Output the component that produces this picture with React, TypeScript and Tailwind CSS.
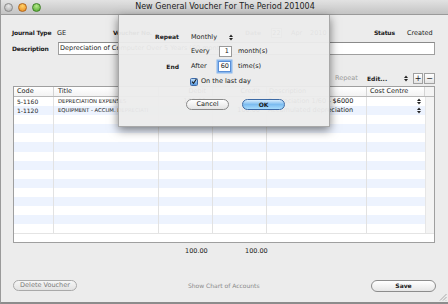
import React from "react";

const F = { fontFamily: '"DejaVu Sans", "Noto Sans", sans-serif' } as React.CSSProperties;

function Arrows({ className = "" }: { className?: string }) {
  return (
    <svg width="4" height="7" viewBox="0 0 4 7" className={className}>
      <path d="M0 3 L2 0.5 L4 3 Z" fill="#222" />
      <path d="M0 4 L2 6.5 L4 4 Z" fill="#222" />
    </svg>
  );
}

function Light({ from, to, border }: { from: string; to: string; border: string }) {
  return (
    <div
      className="w-[9px] h-[9px] rounded-full"
      style={{ background: `radial-gradient(circle at 50% 30%, ${from}, ${to})`, border: `1px solid ${border}` }}
    />
  );
}

const rows = Array.from({ length: 15 }, (_, i) => i);

export default function App() {
  return (
    <div
      className="relative w-[448px] h-[304px] overflow-hidden bg-[#ececec] border-l border-[#9a9a9a] border-b-2 border-b-[#8c8c8c] flex flex-col text-[6.5px] text-[#1a1a1a] leading-none whitespace-nowrap"
      style={F}
    >
      {/* Title bar */}
      <div className="h-[15px] shrink-0 flex items-center relative bg-gradient-to-b from-[#e2e2e2] to-[#c4c4c4] border-b border-[#9a9a9a]">
        <div className="flex items-center gap-[5px] pl-[3px]">
          <Light from="#e6e6e6" to="#a9a9a9" border="#8a8a8a" />
          <Light from="#ffd36a" to="#e8871c" border="#b0651a" />
          <Light from="#b6ea8a" to="#4da52a" border="#3e8126" />
        </div>
        <div className="absolute inset-0 flex items-center justify-center text-[8px] text-[#222] pl-[1px]">
          New General Voucher For The Period 201004
        </div>
      </div>

      {/* Content */}
      <div className="flex flex-col pl-[11px]">
        {/* Row 1 */}
        <div className="mt-[12px] h-[12px] flex items-center">
          <span className="w-[45px] font-bold text-[6px] tracking-[-0.2px]">Journal Type</span>
          <span className="w-[56px]">GE</span>
          <span className="w-[132px] font-bold text-[6px] tracking-[-0.2px]">Voucher No.</span>
          <span className="w-[26px] font-bold text-[#555] text-[6px]">Date</span>
          <span className="w-[11px] h-[10px] border border-[#b5b5b5] bg-white flex items-center justify-center">22</span>
          <span className="w-[9px]" />
          <span className="w-[19px]">Apr</span>
          <span className="w-[64px]">2010</span>
          <span className="w-[33px] font-bold text-[6px] tracking-[-0.2px]">Status</span>
          <span>Created</span>
        </div>
        {/* Row 2 */}
        <div className="mt-[3px] h-[13px] flex items-center">
          <span className="w-[46px] font-bold text-[6px] tracking-[-0.2px]">Description</span>
          <div className="w-[377px] h-[13px] bg-white border border-[#9f9f9f] border-t-[#8a8a8a] flex items-center pl-[1px]">
            Depreciation of Computer Over 5 Years (60 months)
          </div>
        </div>
        {/* Toolbar */}
        <div className="mt-[18px] h-[11px] flex items-center">
          <span className="ml-[323px] w-[32px] text-[#9a9a9a]">Repeat</span>
          <span className="w-[37px] font-bold text-[6px] text-[#222]">Edit...</span>
          <Arrows className="mr-[5px]" />
          <div className="w-[10px] h-[11px] bg-gradient-to-b from-white to-[#e4e4e4] border border-[#a0a0a0] flex items-center justify-center text-[8px]">+</div>
          <div className="ml-[1px] w-[11px] h-[11px] bg-gradient-to-b from-white to-[#e4e4e4] border border-[#a0a0a0] flex items-center justify-center text-[8px]">−</div>
        </div>
      </div>

      {/* Table */}
      <div className="mt-[2px] ml-[12px] w-[422px] h-[157px] border border-[#9f9f9f] bg-white flex flex-col">
        <div className="h-[10px] shrink-0 flex border-b border-[#b8b8b8] bg-gradient-to-b from-white to-[#f3f3f3]">
          <div className="w-[40px] border-r border-[#d4d4d4] pl-[3px] flex items-center">Code</div>
          <div className="w-[105px] border-r border-[#d4d4d4] pl-[4px] flex items-center">Title</div>
          <div className="w-[54px] border-r border-[#d4d4d4] pr-[6px] flex items-center justify-end">Debit</div>
          <div className="w-[54px] border-r border-[#d4d4d4] pr-[6px] flex items-center justify-end">Credit</div>
          <div className="w-[100px] border-r border-[#d4d4d4] pl-[2px] flex items-center">Description</div>
          <div className="w-[58px] border-r border-[#d4d4d4] pl-[3px] flex items-center">Cost Centre</div>
          <div className="flex-1 bg-[#f4f4f4]" />
        </div>
        <div className="flex">
          <div className="w-[411px] flex flex-col">
            {rows.map((i) => (
              <div key={i} className={`h-[9.1px] flex ${i % 2 === 1 ? "bg-[#edf3fe]" : "bg-white"}`}>
                <div className="w-[40px] border-r border-[#e2e2e2] pl-[3px] flex items-center text-[6px]">
                  {i === 0 ? "5-1160" : i === 1 ? "1-1120" : ""}
                </div>
                <div className="w-[105px] border-r border-[#e2e2e2] pl-[4px] flex items-center text-[5.3px] overflow-hidden">
                  {i === 0 ? "DEPRECIATION EXPENSES" : i === 1 ? "EQUIPMENT - ACCUM. DEPRECIATI" : ""}
                </div>
                <div className="w-[54px] border-r border-[#e2e2e2] pr-[6px] flex items-center justify-end">
                  {i === 0 ? "100.00" : ""}
                </div>
                <div className="w-[54px] border-r border-[#e2e2e2] pr-[6px] flex items-center justify-end">
                  {i === 1 ? "100.00" : ""}
                </div>
                <div className="w-[100px] border-r border-[#e2e2e2] pl-[1px] flex items-center overflow-hidden">
                  {i === 0 ? "Depreciation 1/60 - $6000" : i === 1 ? "Accumulated depreciation" : ""}
                </div>
                <div className="w-[58px] flex items-center justify-end pr-[4px]">
                  {i < 2 ? <Arrows /> : null}
                </div>
              </div>
            ))}
          </div>
          <div className="flex-1 bg-[#f4f4f4] border-l border-[#e6e6e6]" />
        </div>
        <div className="flex-1 bg-white border-t border-[#e4e4e4]" />
      </div>

      {/* Totals */}
      <div className="mt-[3px] h-[10px] flex items-center">
        <span className="ml-[184px] w-[60px]">100.00</span>
        <span>100.00</span>
      </div>

      {/* Bottom */}
      <div className="mt-[24px] h-[11px] flex items-center">
        <div className="ml-[12px] w-[64px] h-[11px] rounded-full border border-[#a9a9a9] bg-gradient-to-b from-[#f6f6f6] to-[#e2e2e2] flex items-center justify-center text-[#7a7a7a]">
          Delete Voucher
        </div>
        <span className="ml-[111px] text-[#8a8a8a] text-[6px]">Show Chart of Accounts</span>
        <div className="ml-auto mr-[12px] w-[65px] h-[12px] rounded-full border border-[#8c8c8c] bg-gradient-to-b from-white to-[#e6e6e6] flex items-center justify-center font-bold text-[6px]">
          Save
        </div>
      </div>

      {/* Resize grip */}
      <svg className="absolute right-[1px] bottom-[1px]" width="9" height="9" viewBox="0 0 9 9">
        <path d="M8.5 2 L2 8.5 M8.5 5 L5 8.5 M8.5 8 L8 8.5" stroke="#9a9a9a" strokeWidth="0.8" />
      </svg>

      {/* Sheet */}
      <div className="absolute left-[117px] top-[15px] w-[212px] h-[112px] bg-[rgba(236,236,236,0.95)] shadow-[0_3px_9px_rgba(0,0,0,0.5)] border-x border-b border-[#a8a8a8] flex flex-col">
        <div className="mt-[17px] h-[10px] flex items-center">
          <span className="w-[60px] text-right font-bold text-[6px]">Repeat</span>
          <span className="ml-[12px] w-[38px]">Monthly</span>
          <Arrows />
        </div>
        <div className="mt-[4px] h-[11px] flex items-center">
          <span className="ml-[72px] w-[28px]">Every</span>
          <div className="w-[13px] h-[11px] bg-white border border-[#9a9a9a] flex items-center justify-end pr-[2px]">1</div>
          <span className="ml-[6px]">month(s)</span>
        </div>
        <div className="mt-[4px] h-[11px] flex items-center">
          <span className="w-[60px] text-right font-bold text-[6px]">End</span>
          <span className="ml-[12px] w-[27px]">After</span>
          <div className="w-[13px] h-[11px] bg-white border border-[#5b8fd6] shadow-[0_0_0_1.5px_#8ab8ee] flex items-center justify-end pr-[1px]">60</div>
          <span className="ml-[7px]">time(s)</span>
        </div>
        <div className="mt-[5px] h-[9px] flex items-center">
          <div className="ml-[71px] w-[8px] h-[8px] rounded-[1.5px] border border-[#3e6aa8] bg-gradient-to-b from-[#bcdcf8] to-[#5a9be0] flex items-center justify-center">
            <svg width="7" height="7" viewBox="0 0 7 7">
              <path d="M1.2 3.6 L3 5.6 L6.3 0.5" stroke="#1a1a1a" strokeWidth="1.2" fill="none" />
            </svg>
          </div>
          <span className="ml-[3px]">On the last day</span>
        </div>
        <div className="mt-[13px] h-[11px] flex items-center">
          <div className="ml-[67px] w-[43px] h-[11px] rounded-full border border-[#8a8a8a] bg-gradient-to-b from-white to-[#e4e4e4] flex items-center justify-center">
            Cancel
          </div>
          <div className="ml-[13px] w-[43px] h-[11px] rounded-full border border-[#3d6aa5] bg-gradient-to-b from-[#d6ecfc] via-[#7cbcf0] to-[#a8dcfc] flex items-center justify-center font-bold text-[6px]">
            OK
          </div>
        </div>
      </div>
    </div>
  );
}
